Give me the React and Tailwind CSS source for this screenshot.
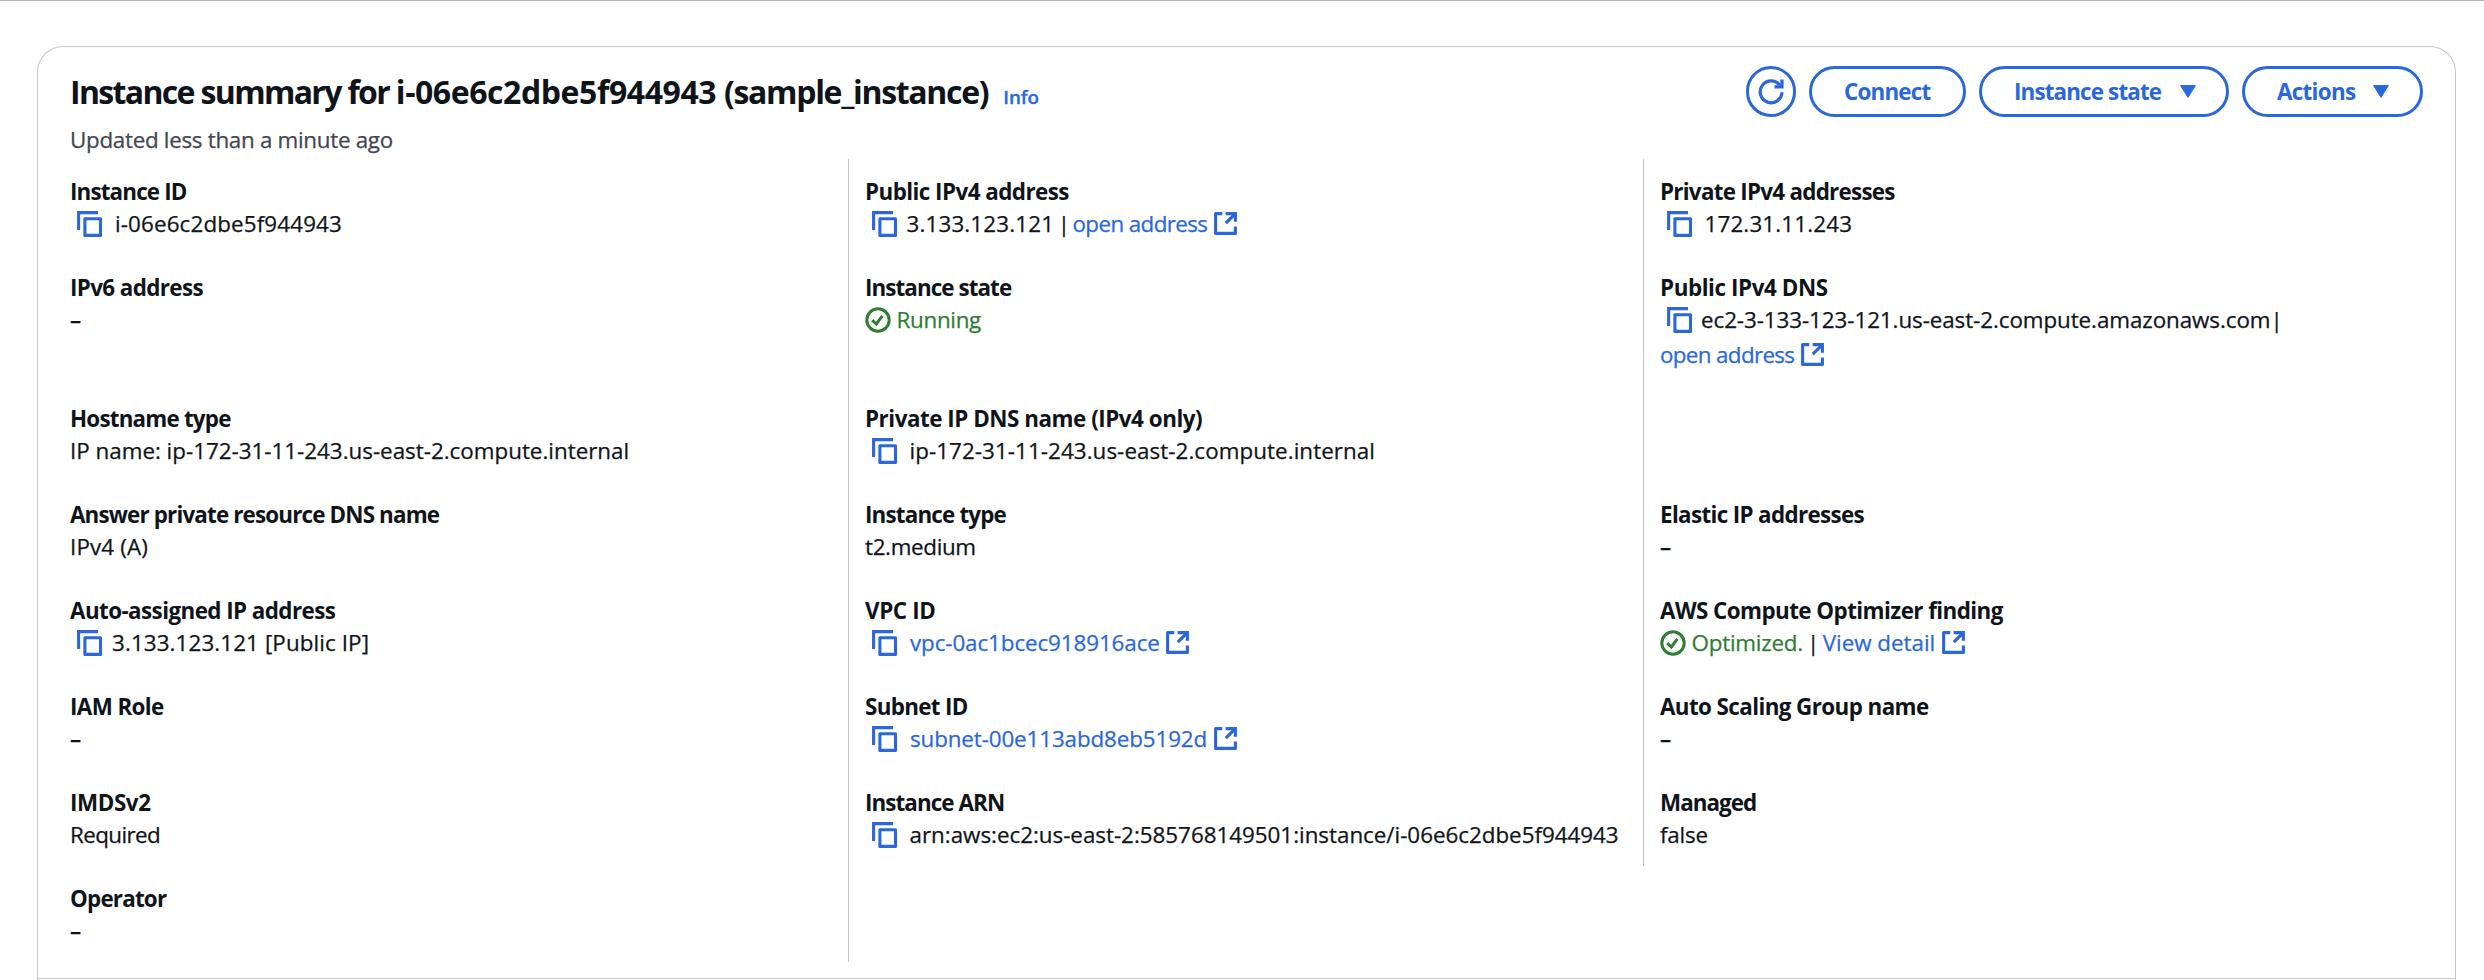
import React from "react";

function CopyIcon() {
  return (
    <svg viewBox="0 0 26 26" className="ml-[6.5px] h-[26px] w-[26px] shrink-0" fill="none" stroke="#2a67dd" strokeWidth="3.1" strokeLinejoin="round">
      <path d="M1.6 19V1.6H21" strokeLinejoin="miter" />
      <rect x="7.9" y="7.7" width="15.6" height="16.7" />
    </svg>
  );
}

function ExternalIcon() {
  return (
    <svg viewBox="0 0 23 23" className="ml-[6.5px] h-[23px] w-[23px] shrink-0" fill="none" stroke="#2a67dd" strokeWidth="3.1">
      <path d="M8.3 1.6H1.6V21.4H21.4V14.6" strokeLinejoin="round" />
      <path d="M11.6 1.6H21.4V9.8M21.2 1.8L11.8 11.2" />
    </svg>
  );
}

function CheckIcon() {
  return (
    <svg viewBox="0 0 26 26" className="h-[26px] w-[26px] shrink-0" fill="none" stroke="#2f7d32" strokeWidth="3">
      <circle cx="13" cy="13" r="11.2" />
      <path d="M7.2 13.2L11.3 17L17.4 8.9" />
    </svg>
  );
}

function Field({ label, track, className, children }) {
  return (
    <div className={`pt-4 ${className}`}>
      <div className={`h-8 whitespace-nowrap text-[22.4px] leading-[34px] font-bold ${track}`}>{label}</div>
      {children}
    </div>
  );
}

function Line({ children }) {
  return <div className="flex h-[33px] items-center whitespace-nowrap leading-[33px] [-webkit-text-stroke:0.25px]">{children}</div>;
}

function Value({ className = "", children }) {
  return <span className={`block ${className}`}>{children}</span>;
}

function Empty() {
  return (
    <Line>
      <span className="block font-semibold">–</span>
    </Line>
  );
}

function Link({ className = "", children }) {
  return (
    <>
      <a className={`block text-[#2a67dd] ${className}`}>{children}</a>
      <ExternalIcon />
    </>
  );
}

function Button({ className, track, label, caret }) {
  return (
    <button className={`flex h-[51px] items-center rounded-full border-3 border-[#2a67dd] text-[22.4px] font-bold text-[#2a67dd] ${className}`}>
      <span className={`block whitespace-nowrap ${track}`}>{label}</span>
      {caret && (
        <svg viewBox="0 0 16 13" className="ml-auto h-[13px] w-4" fill="#2a67dd" stroke="#2a67dd" strokeWidth="1" strokeLinejoin="round">
          <path d="M.6.6H15.4L8 12.4Z" />
        </svg>
      )}
    </button>
  );
}

const first = "pl-[32px]";
const ruled = "border-l border-[#c6c6cd] pl-4";

export default function App() {
  return (
    <div className="flex h-[980px] w-[2484px] flex-col overflow-hidden border-t border-[#b4b4bb] bg-white pt-[45px] pl-[37px] text-[22.4px] text-[#0f141a] [font-family:'Open_Sans',sans-serif]">
      <section className="flex w-[2419px] grow flex-col rounded-t-[26px] border border-b-0 border-[#c6c6cd]">
        <header className="flex h-[112px] shrink-0 items-start justify-between pt-[19px] pr-8 pl-8">
          <div>
            <h1 className="h-[50px] whitespace-nowrap text-[32px] leading-[51px] font-bold">
              <span className="tracking-[-1.66px]">Instance summary for </span>
              <span className="tracking-[-0.43px]">i-06e6c2dbe5f944943 </span>
              <span className="tracking-[-1.32px]">(sample_instance)</span>
              <a className="ml-[15px] text-[18.8px] font-semibold tracking-[-0.1px] text-[#2a67dd] [-webkit-text-stroke:0.3px]">Info</a>
            </h1>
            <p className="mt-2 text-[22.4px] leading-8 tracking-[-0.3px] text-[#424650] [-webkit-text-stroke:0.25px]">Updated less than a minute ago</p>
          </div>
          <div className="flex gap-[13px]">
            <button className="flex h-[51px] w-[50px] items-center justify-center rounded-full border-3 border-[#2a67dd]">
              <svg viewBox="0 0 26 26" className="h-[26px] w-[26px]" fill="none" stroke="#2a67dd" strokeWidth="3.2">
                <path d="M24 13.2A10.9 10.9 0 1 1 21.9 6.4" />
                <path d="M24 .4V7.9H16.5" />
              </svg>
            </button>
            <Button className="w-[157px] pl-8" track="tracking-[-0.8px]" label="Connect" />
            <Button className="w-[250px] pr-[30.5px] pl-[32px]" track="tracking-[-0.85px]" label="Instance state" caret />
            <Button className="w-[181px] pr-[31px] pl-8" track="tracking-[-0.7px]" label="Actions" caret />
          </div>
        </header>

        <div className="grid shrink-0 grid-cols-[810px_795px_1fr] grid-rows-[96px_131px_96px_96px_96px_96px_96px_96px]">
          <Field className={first} track="tracking-[-0.84px]" label="Instance ID">
            <Line><CopyIcon /><Value className="ml-[12.5px] tracking-[0.13px]">i-06e6c2dbe5f944943</Value></Line>
          </Field>
          <Field className={ruled} track="tracking-[-0.55px]" label="Public IPv4 address">
            <Line>
              <CopyIcon />
              <Value className="ml-[9px] tracking-[0.15px]">3.133.123.121</Value>
              <Value className="ml-[3.5px]">|</Value>
              <Link className="ml-[2.5px] tracking-[-0.6px]">open address</Link>
            </Line>
          </Field>
          <Field className={ruled} track="tracking-[-0.73px]" label="Private IPv4 addresses">
            <Line><CopyIcon /><Value className="ml-[12px] tracking-[0.15px]">172.31.11.243</Value></Line>
          </Field>

          <Field className={first} track="tracking-[-0.62px]" label="IPv6 address">
            <Empty />
          </Field>
          <Field className={ruled} track="tracking-[-0.92px]" label="Instance state">
            <Line><CheckIcon /><Value className="ml-[5.5px] tracking-[-0.3px] text-[#2f7d32]">Running</Value></Line>
          </Field>
          <Field className={ruled} track="tracking-[-0.42px]" label="Public IPv4 DNS">
            <Line>
              <CopyIcon />
              <Value className="ml-[8.5px] tracking-[-0.08px]">ec2-3-133-123-121.us-east-2.compute.amazonaws.com</Value>
              <Value>|</Value>
            </Line>
            <div className="mt-[2px]">
              <Line><Link className="tracking-[-0.65px]">open address</Link></Line>
            </div>
          </Field>

          <Field className={first} track="tracking-[-0.8px]" label="Hostname type">
            <Line><Value className="tracking-[-0.01px]">IP name: ip-172-31-11-243.us-east-2.compute.internal</Value></Line>
          </Field>
          <Field className={ruled} track="tracking-[-0.47px]" label="Private IP DNS name (IPv4 only)">
            <Line><CopyIcon /><Value className="ml-[12px] tracking-[0.06px]">ip-172-31-11-243.us-east-2.compute.internal</Value></Line>
          </Field>
          <div className={ruled} />

          <Field className={first} track="tracking-[-0.84px]" label="Answer private resource DNS name">
            <Line><Value className="tracking-[0.15px]">IPv4 (A)</Value></Line>
          </Field>
          <Field className={ruled} track="tracking-[-0.82px]" label="Instance type">
            <Line><Value className="tracking-[-0.34px]">t2.medium</Value></Line>
          </Field>
          <Field className={ruled} track="tracking-[-0.65px]" label="Elastic IP addresses">
            <Empty />
          </Field>

          <Field className={first} track="tracking-[-0.57px]" label="Auto-assigned IP address">
            <Line><CopyIcon /><Value className="ml-[9.5px] tracking-[0.1px]">3.133.123.121 [Public IP]</Value></Line>
          </Field>
          <Field className={ruled} track="tracking-[-0.38px]" label="VPC ID">
            <Line><CopyIcon /><Link className="ml-[12.5px] tracking-[-0.1px]">vpc-0ac1bcec918916ace</Link></Line>
          </Field>
          <Field className={ruled} track="tracking-[-0.56px]" label="AWS Compute Optimizer finding">
            <Line>
              <CheckIcon />
              <Value className="ml-[5.5px] tracking-[-0.24px] text-[#2f7d32]">Optimized.</Value>
              <Value className="ml-[4px]">|</Value>
              <Link className="ml-[3.5px] tracking-[-0.02px]">View detail</Link>
            </Line>
          </Field>

          <Field className={first} track="tracking-[-0.6px]" label="IAM Role">
            <Empty />
          </Field>
          <Field className={ruled} track="tracking-[-0.66px]" label="Subnet ID">
            <Line><CopyIcon /><Link className="ml-[12.5px] tracking-[-0.12px]">subnet-00e113abd8eb5192d</Link></Line>
          </Field>
          <Field className={ruled} track="tracking-[-0.59px]" label="Auto Scaling Group name">
            <Empty />
          </Field>

          <Field className={first} track="tracking-[-0.4px]" label="IMDSv2">
            <Line><Value className="tracking-[-0.6px]">Required</Value></Line>
          </Field>
          <Field className={ruled} track="tracking-[-0.92px]" label="Instance ARN">
            <Line><CopyIcon /><Value className="ml-[12px] tracking-[-0.02px]">arn:aws:ec2:us-east-2:585768149501:instance/i-06e6c2dbe5f944943</Value></Line>
          </Field>
          <Field className={ruled} track="tracking-[-0.95px]" label="Managed">
            <Line><Value className="tracking-[-0.2px]">false</Value></Line>
          </Field>

          <Field className={first} track="tracking-[-0.8px]" label="Operator">
            <Empty />
          </Field>
          <div className={ruled} />
        </div>

        <div className="h-[17px] shrink-0 border-b border-[#c6c6cd]" />
      </section>
    </div>
  );
}
